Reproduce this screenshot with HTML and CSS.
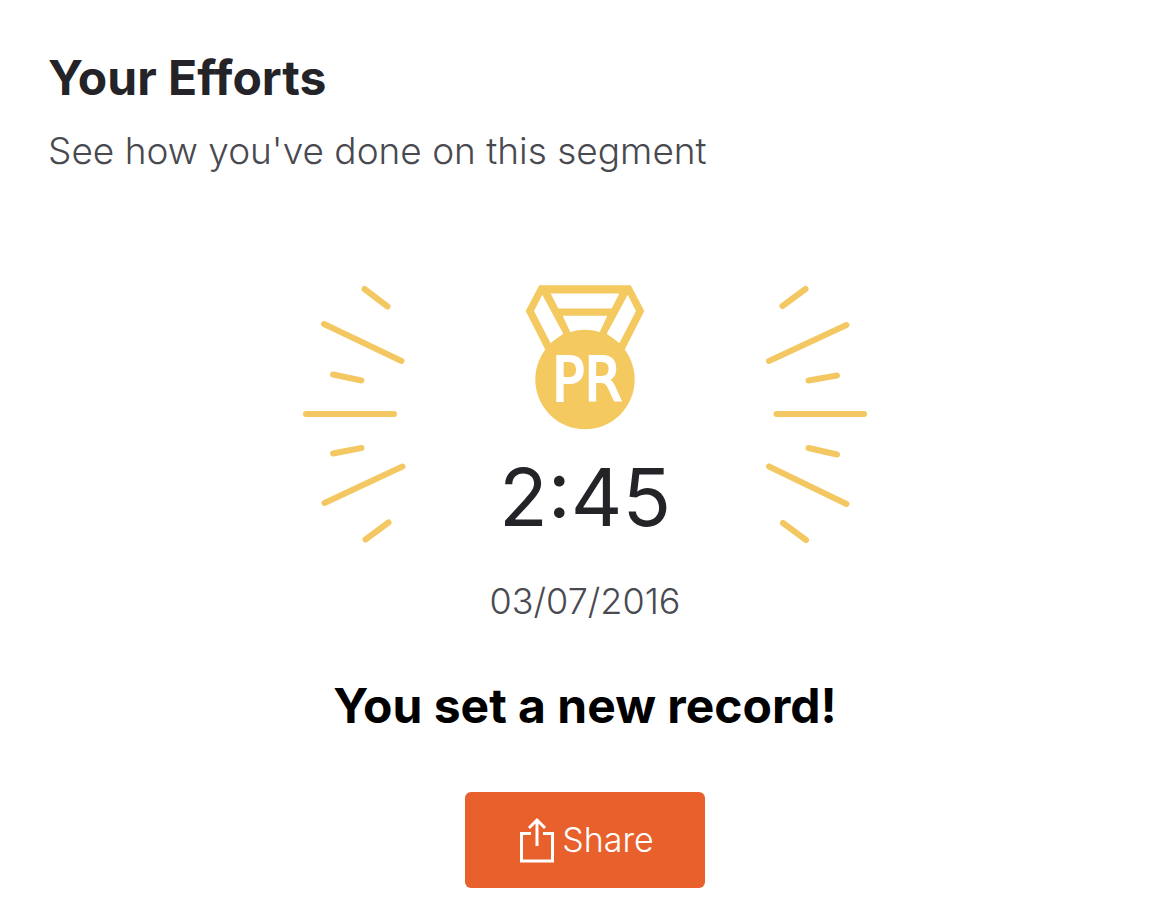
FILE: index.html
```html
<!DOCTYPE html>
<html lang="en">
<head>
<meta charset="utf-8">
<meta name="viewport" content="width=device-width, initial-scale=1">
<title>Your Efforts</title>
<link rel="stylesheet" href="styles.css">
</head>
<body>
<main class="efforts">
  <header class="efforts-header">
    <h1 class="title">Your Efforts</h1>
    <p class="subtitle">See how you've done on this segment</p>
  </header>
  <section class="record">
    <div class="celebration">
      <svg class="rays" width="104" height="260" viewBox="302 284 104 260" aria-hidden="true">
        <path d="M364.500 289L387.500 306.500M324 324L401.500 361M333 374.500L361.500 380.500M306 414H394M333 453.500L361.500 448M324.500 503L402.500 466.500M365.500 539.500L388.500 522.500"/>
      </svg>
      <div class="result">
        <svg class="medal" width="120" height="146" viewBox="525 284 120 146" role="img" aria-label="PR medal">
          <path class="ribbon" fill-rule="evenodd" d="M539.300 285.200H630.700L644.300 311L624.500 350H545.500L525.700 311ZM542.300 294.700L534 311L550.700 343.300L563.300 333.700ZM627.700 294.700L636 311L619.300 343.300L606.700 333.700ZM550.700 293.500H619.300L611.700 308.500H558.300ZM562.700 315.700H607.300L599.300 333H570.700Z"/>
          <circle class="disc" cx="585" cy="379.500" r="49.700"/>
          <text class="medal-text" x="587" y="401" text-anchor="middle">PR</text>
        </svg>
        <p class="time">2:45</p>
      </div>
      <svg class="rays" width="104" height="260" viewBox="764 284 104 260" aria-hidden="true">
        <path d="M782.500 306L805.500 289M769 361L846.500 325M808.500 380.500L837 375.500M776.500 414H864M808.500 448L837 454.500M769 466.500L846.500 504M783 523L806 540"/>
      </svg>
    </div>
    <p class="date">03/07/2016</p>
    <h2 class="message">You set a new record!</h2>
    <button class="share" type="button">
      <svg class="share-icon" width="34" height="46" viewBox="0 0 34 46" aria-hidden="true">
        <path d="M11 16.500H1.500V44H32.500V16.500H23M17 29V3M9 11L17 3L25 11"/>
      </svg>
      <span>Share</span>
    </button>
  </section>
</main>
</body>
</html>
```
FILE: styles.css
```css
* { box-sizing: border-box; }
body {
  margin: 0;
  background: #fff;
  color: #242428;
  font-family: Inter, "Liberation Sans", sans-serif;
}
.efforts { padding: 48px 48px 20px; }
.title, .subtitle, .time, .date, .message { margin: 0; }
.title {
  font-size: 48px;
  line-height: 60px;
  font-weight: 700;
}
.subtitle {
  margin-top: 16px;
  font-size: 37px;
  line-height: 54px;
  font-weight: 300;
  color: #494950;
}
.record {
  display: flex;
  flex-direction: column;
  align-items: center;
  margin-top: 106px;
}
.celebration { display: flex; justify-content: center; }
.rays {
  fill: none;
  stroke: #f3c863;
  stroke-width: 6;
  stroke-linecap: round;
}
.result {
  display: flex;
  flex-direction: column;
  align-items: center;
  width: 358px;
}
.ribbon, .disc { fill: #f4c95f; }
.medal-text {
  fill: #fff;
  stroke: #fff;
  stroke-width: 2;
  font-family: "DejaVu Sans Condensed", "DejaVu Sans", sans-serif;
  font-size: 60px;
}
.time {
  margin-top: 20px;
  font-size: 80px;
  line-height: 94px;
  font-weight: 400;
}
.date {
  margin-top: 35px;
  font-size: 36px;
  line-height: 44px;
  font-weight: 300;
  color: #494950;
}
.message {
  margin-top: 53px;
  color: #000;
  font-size: 48px;
  line-height: 60px;
}
.share {
  display: flex;
  align-items: center;
  justify-content: center;
  gap: 8px;
  width: 240px;
  height: 96px;
  margin-top: 56px;
  padding: 0 0 0 4px;
  border: 0;
  border-radius: 6px;
  background: #e8602c;
  color: #fff;
  font: 300 34px/44px Inter, "Liberation Sans", sans-serif;
}
.share-icon { fill: none; stroke: #fff; stroke-width: 3; }
```
